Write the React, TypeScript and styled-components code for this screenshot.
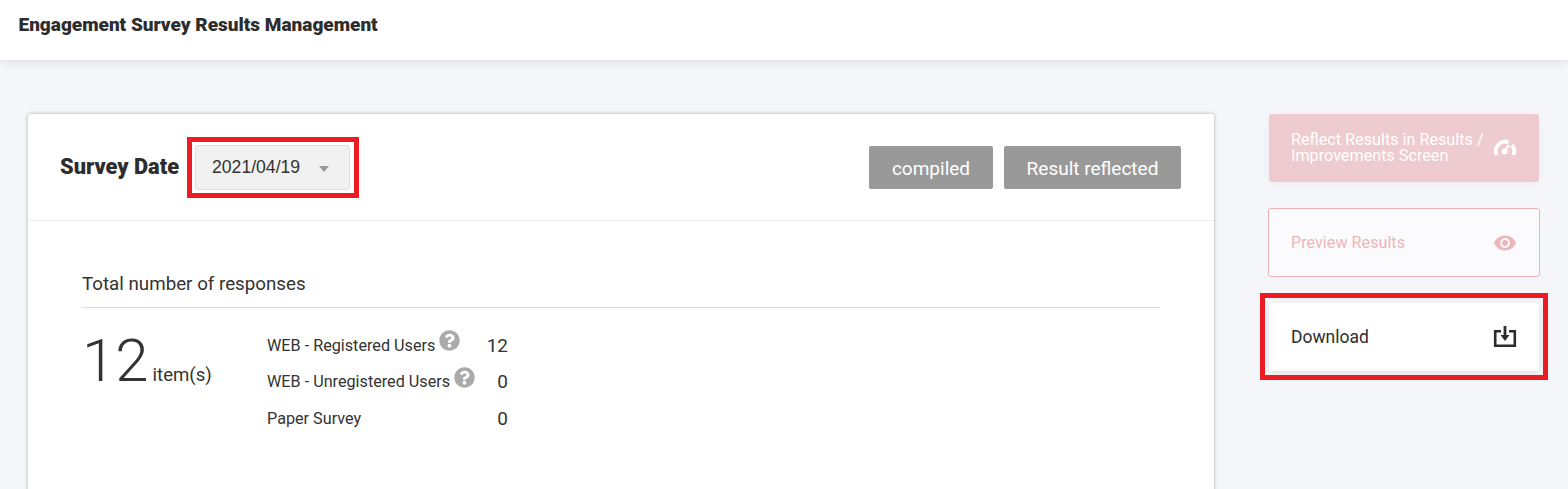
import React from "react";
import styled, { createGlobalStyle } from "styled-components";
import { MdRemoveRedEye } from "react-icons/md";
import { FaQuestionCircle } from "react-icons/fa";

const Global = createGlobalStyle`
  html, body { margin: 0; padding: 0; height: 489px; overflow: hidden; background: #f5f6fa; }
  body { font-family: Roboto, "Liberation Sans", sans-serif; color: #333; }
`;

const Page = styled.div`
  display: flex;
  flex-direction: column;
  height: 489px;
  overflow: hidden;
`;

const Header = styled.header`
  flex: none;
  height: 60px;
  box-sizing: border-box;
  padding: 14px 18.5px 0;
  background: #fff;
  box-shadow: 0 2px 10px rgba(0, 0, 0, 0.1);
`;

const Title = styled.h1`
  margin: 0;
  font-size: 19px;
  line-height: 22px;
  font-weight: 900;
  color: #2d2d2d;
`;

const Main = styled.main`
  flex: 1;
  display: flex;
  align-items: flex-start;
  gap: 55px;
  padding: 54px 0 0 28px;
`;

const Card = styled.section`
  flex: none;
  width: 1186px;
  height: 500px;
  background: #fff;
  border-radius: 3px;
  box-shadow: 0 0 4px rgba(0, 0, 0, 0.28);
`;

const CardHead = styled.div`
  display: flex;
  align-items: center;
  height: 107px;
  box-sizing: border-box;
  padding: 0 33px 0 32px;
  border-bottom: 1px solid #eee;
`;

const DateLabel = styled.span`
  margin: 0 16px 2px 0;
  font-size: 21.8px;
  font-weight: 900;
  color: #2d2d2d;
`;

const Highlight = styled.div<{ $pad: string; $out: string }>`
  border: 5px solid #ed1c24;
  padding: ${(p) => p.$pad};
  margin: ${(p) => p.$out};
`;

const Select = styled.div`
  display: flex;
  align-items: center;
  width: 155px;
  height: 45px;
  box-sizing: border-box;
  padding-left: 16px;
  background: #f1f1f1;
  border: 1px solid #ddd;
  border-radius: 3px;
  font-family: "Liberation Sans", Arial, sans-serif;
  font-size: 17.6px;
  color: #333;
`;

const Caret = styled.i`
  width: 0;
  height: 0;
  margin: 3px 0 0 19px;
  border-left: 5.5px solid transparent;
  border-right: 5.5px solid transparent;
  border-top: 6px solid #999;
`;

const Statuses = styled.div`
  display: flex;
  gap: 11px;
  margin-left: auto;
`;

const Status = styled.div<{ $w: number }>`
  display: flex;
  align-items: center;
  justify-content: center;
  width: ${(p) => p.$w}px;
  height: 43px;
  box-sizing: border-box;
  padding-top: 2px;
  background: #999;
  color: #fff;
  border-radius: 2px;
  font-size: 19px;
`;

const CardBody = styled.div`
  padding: 50px 54px 0;
`;

const SectionTitle = styled.h2`
  margin: 0;
  height: 37px;
  box-sizing: border-box;
  border-bottom: 1px solid #ddd;
  font-size: 18.75px;
  line-height: 26px;
  font-weight: 400;
  color: #333;
`;

const Stats = styled.div`
  display: flex;
  align-items: flex-start;
  padding-top: 19px;
`;

const Total = styled.div`
  display: flex;
  align-items: baseline;
  width: 185px;
  margin-top: 2px;
`;

const Big = styled.span`
  font-size: 60px;
  line-height: 64px;
  font-weight: 300;
  color: #333;
`;

const Unit = styled.span`
  margin-left: 4px;
  font-size: 18.6px;
  color: #333;
`;

const Rows = styled.div`
  display: flex;
  flex-direction: column;
  width: 241px;
`;

const Row = styled.div`
  display: flex;
  align-items: center;
  height: 36.5px;
  font-size: 16.2px;
  color: #333;
`;

const Help = styled(FaQuestionCircle)`
  margin: -9px 0 0 4px;
  font-size: 21px;
  color: #aaa;
`;

const Value = styled.span`
  margin-left: auto;
  font-size: 19px;
`;

const Side = styled.aside`
  display: flex;
  flex-direction: column;
  gap: 26px;
  flex: none;
  width: 270px;
`;

const Action = styled.div`
  display: flex;
  align-items: center;
  justify-content: space-between;
  height: 68px;
  box-sizing: border-box;
  padding: 0 22px;
  border-radius: 3px;
  font-size: 16.2px;
  line-height: 16px;
`;

const Reflect = styled(Action)`
  background: #eecbce;
  color: #fff;
  box-shadow: 0 2px 8px rgba(0, 0, 0, 0.04);
`;

const Preview = styled(Action)`
  margin: 0 -1px;
  height: 69px;
  background: #fbfbfe;
  border: 1px solid #efb0b4;
  color: #efb5b9;
`;

const Download = styled(Action)`
  background: #fff;
  color: #2d2d2d;
  font-size: 17.5px;
  box-shadow: 0 2px 8px rgba(0, 0, 0, 0.1);
`;

const GaugeIcon = () => (
  <svg width="24" height="24" viewBox="0 0 24 24" fill="none" aria-hidden="true">
    <path d="M3.7 19A9.2 9.2 0 0 1 15.5 6.5" stroke="currentColor" strokeWidth="3.8" />
    <path d="M19 9A9.2 9.2 0 0 1 20.3 19" stroke="currentColor" strokeWidth="3.8" />
    <circle cx="11.5" cy="15.5" r="3" fill="currentColor" />
    <path d="M11.5 15L16 9" stroke="currentColor" strokeWidth="2.4" />
  </svg>
);

const DownloadIcon = () => (
  <svg width="24" height="24" viewBox="0 0 24 24" fill="none" aria-hidden="true">
    <path d="M8 6.2H2.2V20.8H21.8V6.2H16" stroke="#2d2d2d" strokeWidth="2.6" />
    <path d="M12 1V12" stroke="#2d2d2d" strokeWidth="2.8" />
    <path d="M7.5 10H16.5L12 16Z" fill="#2d2d2d" />
  </svg>
);

export default function App() {
  return (
    <Page>
      <Global />
      <Header>
        <Title>Engagement Survey Results Management</Title>
      </Header>
      <Main>
        <Card>
          <CardHead>
            <DateLabel>Survey Date</DateLabel>
            <Highlight $pad="3px 4px 3px 3px" $out="-8px -9px -8px -8px">
              <Select>
                2021/04/19
                <Caret />
              </Select>
            </Highlight>
            <Statuses>
              <Status $w={124}>compiled</Status>
              <Status $w={177}>Result reflected</Status>
            </Statuses>
          </CardHead>
          <CardBody>
            <SectionTitle>Total number of responses</SectionTitle>
            <Stats>
              <Total>
                <Big>12</Big>
                <Unit>item(s)</Unit>
              </Total>
              <Rows>
                <Row>
                  WEB - Registered Users
                  <Help />
                  <Value>12</Value>
                </Row>
                <Row>
                  WEB - Unregistered Users
                  <Help />
                  <Value>0</Value>
                </Row>
                <Row>
                  Paper Survey
                  <Value>0</Value>
                </Row>
              </Rows>
            </Stats>
          </CardBody>
        </Card>
        <Side>
          <Reflect>
            <span>
              Reflect Results in Results /<br />
              Improvements Screen
            </span>
            <GaugeIcon />
          </Reflect>
          <Preview>
            Preview Results
            <MdRemoveRedEye size={24} />
          </Preview>
          <Highlight $pad="5px 4px 4px" $out="-10px -9px -9px">
            <Download>
              Download
              <DownloadIcon />
            </Download>
          </Highlight>
        </Side>
      </Main>
    </Page>
  );
}
